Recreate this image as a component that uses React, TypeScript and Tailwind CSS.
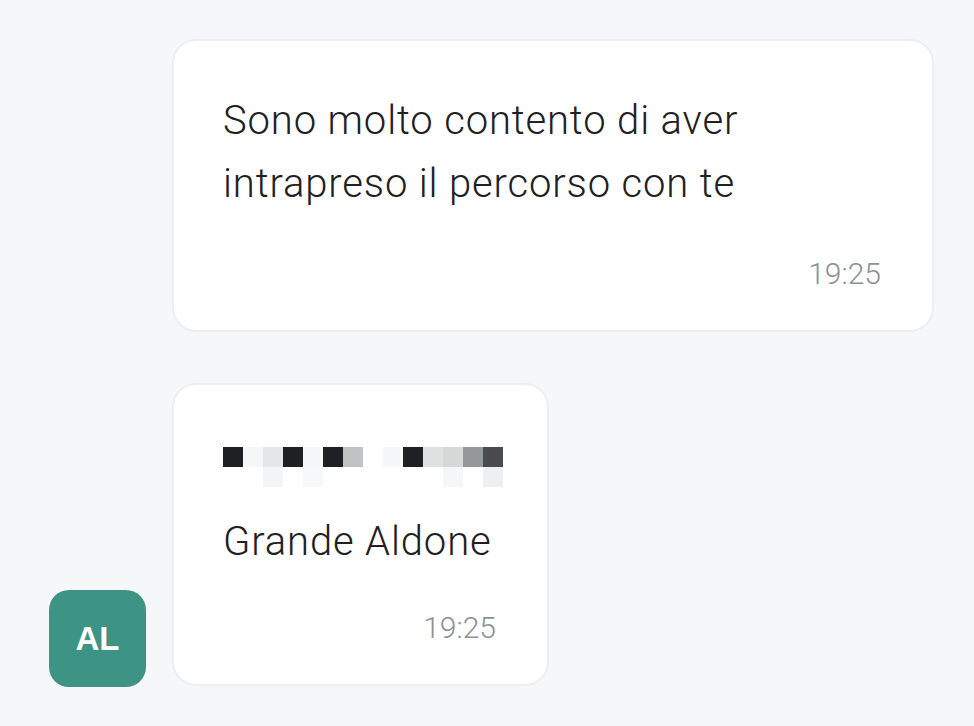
import React from 'react';

const topRow = [
  '#1f2023', '#f5f6f8', '#e5e6e7', '#1f2023', '#f6f7f8', '#1f2023', '#c0c2c3',
  '#ffffff', '#f6f7f8', '#1f2023', '#dfe0df', '#d6d7d7', '#96999c', '#4a4b4e',
];
const bottomRow = [
  '#ffffff', '#ffffff', '#f3f4f5', '#ffffff', '#f7f8f9', '#ffffff', '#ffffff',
  '#ffffff', '#ffffff', '#ffffff', '#ffffff', '#f5f6f7', '#ffffff', '#eeeff0',
];

function Censored() {
  return (
    <div className="grid w-[280px] grid-cols-[repeat(14,20px)]">
      {[...topRow, ...bottomRow].map((c, i) => (
        <div key={i} className="h-5 w-5" style={{ backgroundColor: c }} />
      ))}
    </div>
  );
}

export default function App() {
  return (
    <div
      className="flex h-screen w-full flex-col bg-[#f6f7f9] pl-[49px] pr-[40px] pt-[39px]"
      style={{ fontFamily: 'Roboto, "Liberation Sans", sans-serif' }}
    >
      <div className="flex gap-[26px]">
        <div className="w-[97px] shrink-0" />
        <div className="flex h-[293px] flex-1 flex-col rounded-[24px] border-2 border-[#eceef1] bg-white pl-[49px] pr-[51px] pt-[48px]">
          <p className="text-[40px] font-light leading-[63px] tracking-[0.85px] text-[#1f2023]">
            Sono molto contento di aver
            <br />
            intrapreso il percorso con te
          </p>
          <span className="mt-[41px] self-end text-[30px] font-light leading-[36px] text-[#8b9094]">19:25</span>
        </div>
      </div>

      <div className="mt-[51px] flex items-end gap-[26px]">
        <div className="mb-[-1px] flex h-[97px] w-[97px] shrink-0 items-center justify-center rounded-[20px] bg-[#3d9484] font-['Liberation_Sans',sans-serif] text-[33px] font-bold text-white">
          AL
        </div>
        <div className="flex h-[303px] w-[377px] flex-col rounded-[24px] border-2 border-[#eceef1] bg-white pl-[49px] pr-[51px] pt-[62px]">
          <Censored />
          <p className="mt-[23px] whitespace-nowrap text-[40px] font-light leading-[63px] tracking-[0.85px] text-[#1f2023]">
            Grande Aldone
          </p>
          <span className="mt-[37px] self-end text-[30px] font-light leading-[36px] text-[#8b9094]">19:25</span>
        </div>
      </div>
    </div>
  );
}
